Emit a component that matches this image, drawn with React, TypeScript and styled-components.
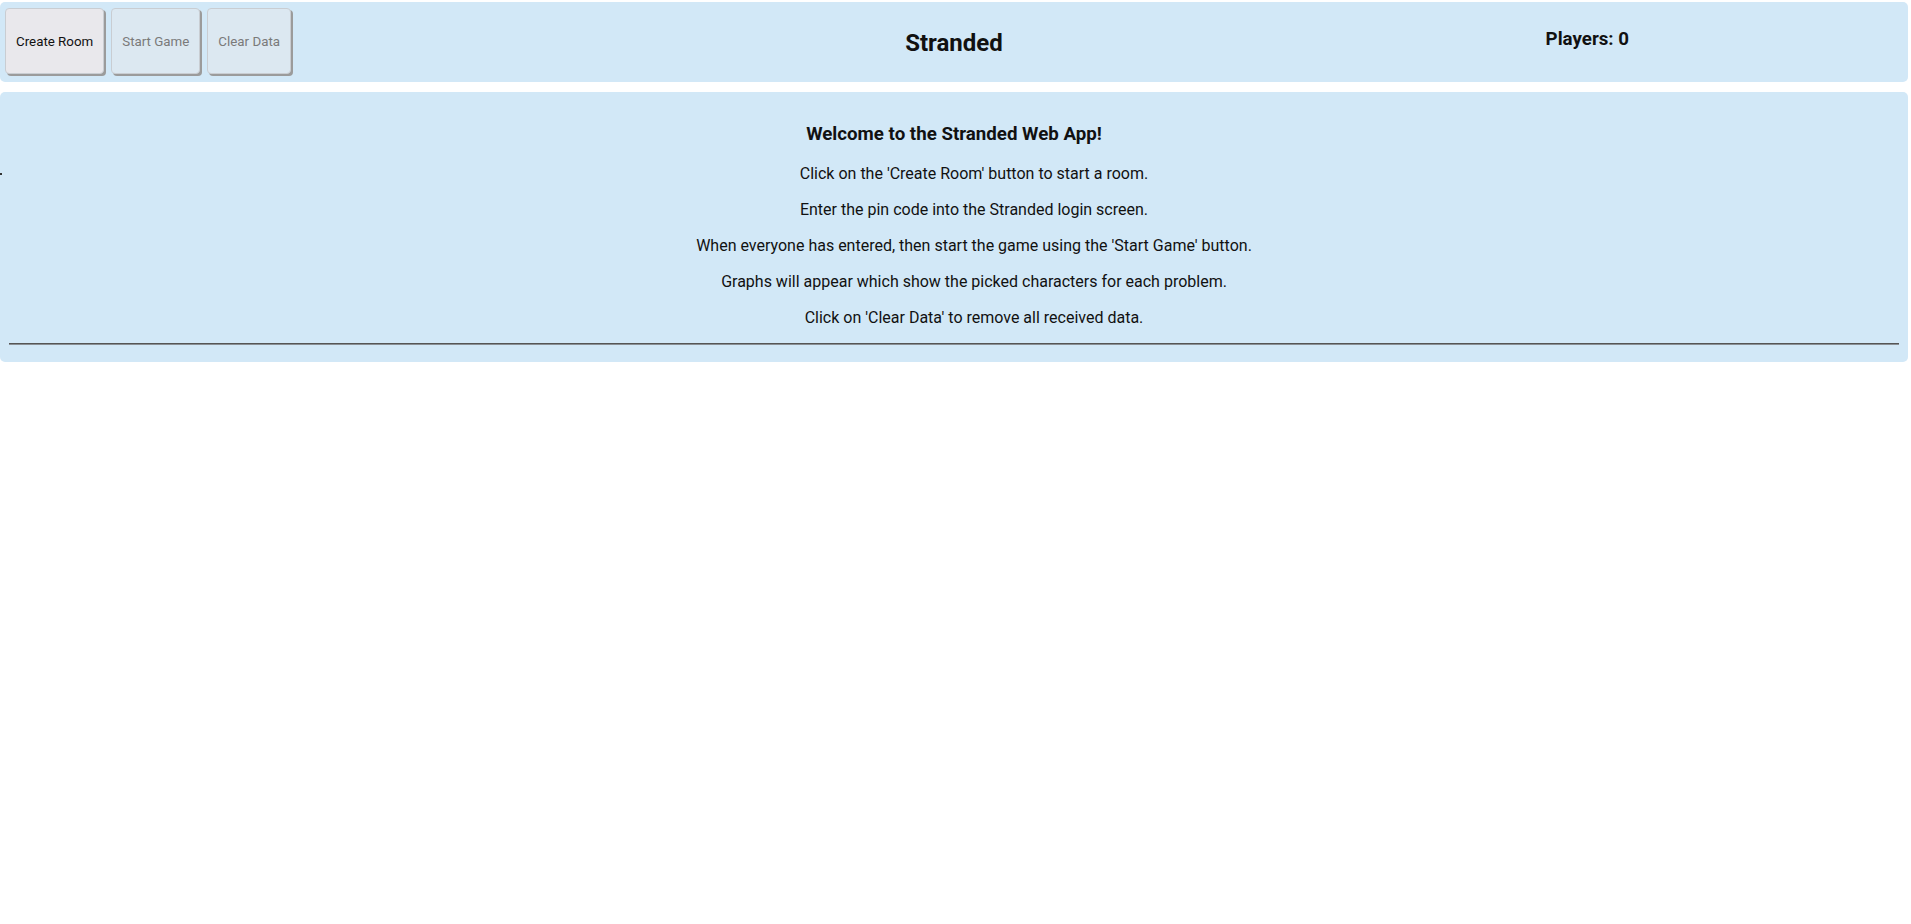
import styled, { createGlobalStyle } from "styled-components";

const steps = [
  "Click on the 'Create Room' button to start a room.",
  "Enter the pin code into the Stranded login screen.",
  "When everyone has entered, then start the game using the 'Start Game' button.",
  "Graphs will appear which show the picked characters for each problem.",
  "Click on 'Clear Data' to remove all received data.",
];

export default function App() {
  return (
    <>
      <GlobalStyle />
      <Page>
        <Header>
          <Buttons>
            <Button>Create Room</Button>
            <Button disabled>Start Game</Button>
            <Button disabled>Clear Data</Button>
          </Buttons>
          <Title>Stranded</Title>
          <Status>
            <Players>Players: 0</Players>
          </Status>
        </Header>
        <Panel>
          <Marker />
          <Heading>Welcome to the Stranded Web App!</Heading>
          <Steps>
            {steps.map((s) => (
              <Step key={s}>{s}</Step>
            ))}
          </Steps>
          <Rule />
        </Panel>
      </Page>
    </>
  );
}

const GlobalStyle = createGlobalStyle`
  body {
    margin: 0;
    background: #ffffff;
    font-family: Roboto, "Liberation Sans", sans-serif;
    color: #111;
  }
`;

const Page = styled.div`
  display: flex;
  flex-direction: column;
  gap: 10px;
  padding: 2px 3px 0 0;
`;

const Header = styled.div`
  display: grid;
  grid-template-columns: 1fr auto 1fr;
  align-items: center;
  height: 80px;
  box-sizing: border-box;
  padding: 0 5px;
  background: #d2e8f7;
  border-radius: 5px;
`;

const Buttons = styled.div`
  display: flex;
  gap: 7px;
  align-self: start;
  padding-top: 6px;
`;

const Button = styled.button`
  height: 66px;
  padding: 0 10px;
  font-family: Roboto, "Liberation Sans", sans-serif;
  font-size: 13.33px;
  border: 1px solid #c9cdd2;
  border-radius: 4px;
  box-shadow: 2px 2px 0 #9b9b9b;
  background: #e9e8ec;
  color: #111;
  &:disabled {
    background: #dce8f1;
    color: #7a7a7a;
  }
`;

const Title = styled.div`
  font-size: 24px;
  font-weight: 700;
  padding-top: 1px;
`;

const Status = styled.div`
  display: flex;
  justify-content: flex-end;
  padding-right: 274px;
  align-self: start;
  padding-top: 26px;
`;

const Players = styled.div`
  font-size: 18.72px;
  font-weight: 700;
  line-height: 22px;
`;

const Panel = styled.div`
  position: relative;
  display: flex;
  flex-direction: column;
  padding: 31px 9px 17px;
  background: #d2e8f7;
  border-radius: 5px;
`;

const Marker = styled.span`
  position: absolute;
  left: 0;
  top: 81px;
  width: 2px;
  height: 2px;
  background: #333;
`;

const Heading = styled.h3`
  margin: 0 0 19px;
  font-size: 18.72px;
  line-height: 22px;
  font-weight: 700;
  text-align: center;
`;

const Steps = styled.div`
  display: flex;
  flex-direction: column;
  gap: 16px;
  padding-left: 40px;
  margin-bottom: 15px;
`;

const Step = styled.p`
  margin: 0;
  font-size: 16px;
  line-height: 20px;
  text-align: center;
`;

const Rule = styled.hr`
  margin: 0;
  border: none;
  border-top: 1px solid #555;
  border-bottom: 1px solid #8a8f94;
`;
